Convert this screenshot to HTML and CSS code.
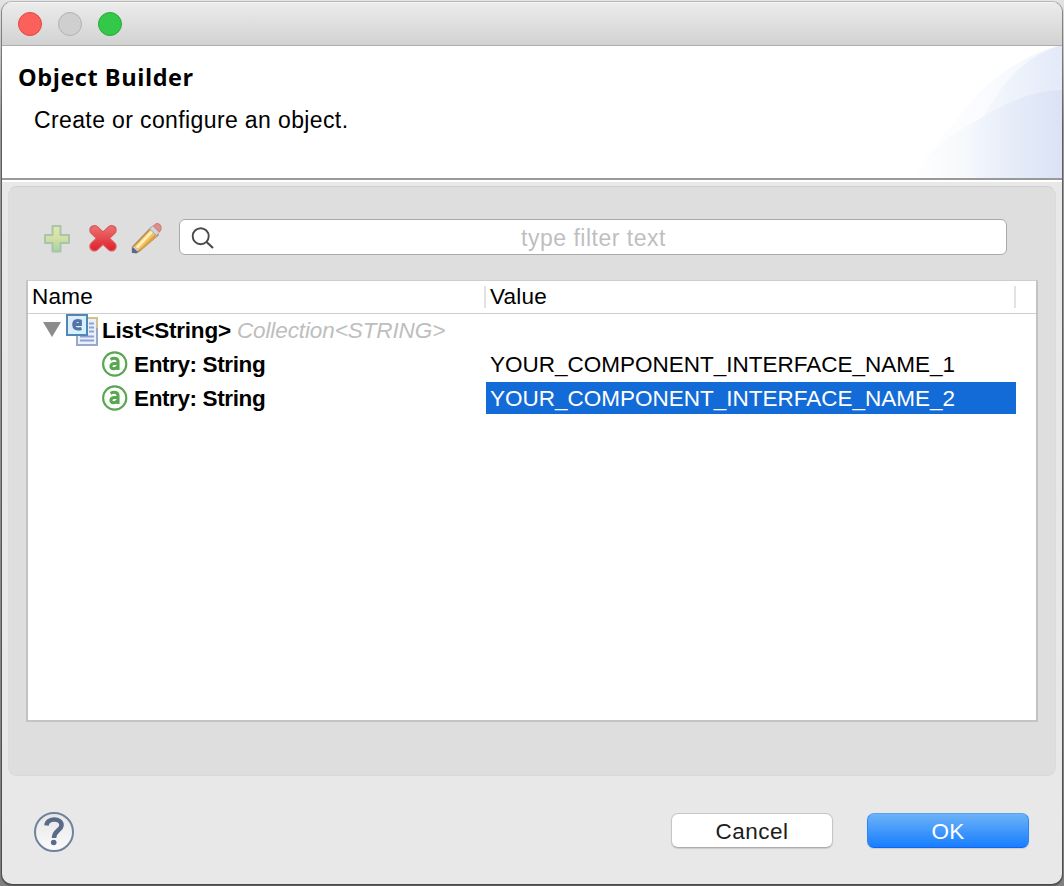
FILE: index.html
```html
<!DOCTYPE html>
<html lang="en">
<head>
<meta charset="utf-8">
<title>Object Builder</title>
<link rel="stylesheet" href="styles.css">
</head>
<body>
<main class="window">
  <div class="titlebar">
    <span class="light light-close"></span>
    <span class="light light-min"></span>
    <span class="light light-zoom"></span>
  </div>
  <header class="banner">
    <div class="banner-text">
      <h1><span class="t-title">Object Builder</span></h1>
      <p><span class="t-desc">Create or configure an object.</span></p>
    </div>
    <svg class="banner-art" width="152" height="132" viewBox="0 0 152 132">
      <defs>
        <linearGradient id="g1" gradientUnits="userSpaceOnUse" x1="0" y1="0" x2="152" y2="0"><stop offset="0" stop-color="#ffffff"/><stop offset=".5" stop-color="#f9fbfe"/><stop offset="1" stop-color="#f1f5fc"/></linearGradient>
        <linearGradient id="g2" gradientUnits="userSpaceOnUse" x1="50" y1="0" x2="152" y2="0"><stop offset="0" stop-color="#f7f9fe"/><stop offset=".4" stop-color="#f1f5fc"/><stop offset="1" stop-color="#e3eaf8"/></linearGradient>
        <linearGradient id="g3" gradientUnits="userSpaceOnUse" x1="0" y1="0" x2="152" y2="0"><stop offset="0" stop-color="#ffffff"/><stop offset=".38" stop-color="#f6f8fb"/><stop offset=".46" stop-color="#f0f4fc"/><stop offset=".7" stop-color="#e5ecf8"/><stop offset="1" stop-color="#dbe2f5"/></linearGradient>
      </defs>
      <path d="M4 132C22 102 48 70 72 44C98 20 125 6 147 0H152V132Z" fill="url(#g1)"/>
      <path d="M50 132Q54 108 64 88Q74 68 88 48Q98 32 112 20Q128 7 148 0H152V132Z" fill="url(#g2)"/>
      <path d="M4 132Q12 116 22 105Q40 89 73 71C100 54 128 44 152 44V132Z" fill="url(#g3)"/>
    </svg>
  </header>
  <section class="group">
    <div class="toolbar">
      <svg class="tool" width="30" height="34" viewBox="0 0 30 34">
        <defs><linearGradient id="gp" x1="0" y1="0" x2="0" y2="1"><stop offset="0" stop-color="#e5e6aa"/><stop offset=".5" stop-color="#d2dfa5"/><stop offset="1" stop-color="#a9d2a0"/></linearGradient></defs>
        <path d="M11.500 6h8v9h8.500v8h-8.500v8.500h-8v-8.500h-7.500v-8h7.500z" fill="url(#gp)" stroke="#a8c5ab" stroke-width="2" stroke-linejoin="round"/>
      </svg>
      <svg class="tool" width="30" height="34" viewBox="0 0 30 34">
        <defs><linearGradient id="gx" gradientUnits="userSpaceOnUse" x1="0" y1="4" x2="0" y2="30"><stop offset="0" stop-color="#ed7a76"/><stop offset="1" stop-color="#e0212d"/></linearGradient></defs>
        <path d="M7.300 10L24.700 26.500M24.700 10L7.300 26.500" fill="none" stroke="#d9595b" stroke-width="10" stroke-linecap="round"/>
        <path d="M7.700 10.400L24.300 26.100M24.300 10.400L7.700 26.100" fill="none" stroke="url(#gx)" stroke-width="8" stroke-linecap="round"/>
      </svg>
      <svg class="tool" width="32" height="34" viewBox="0 0 32 34">
        <g transform="translate(0 2)">
        <path d="M1.500 30V25L20 6L27 13L8 29L5 31Z" fill="#efc164" stroke="#b68b61" stroke-width="1.600"/>
        <path d="M4.500 25L20.500 8L22.500 10L7 26.500Z" fill="#fff0b4"/>
        <path d="M9 27.500L24 12.500L26 14.500L11 27.500Z" fill="#db9f48"/>
        <path d="M1 31V26L3.500 26L7 30L5 31Z" fill="#52689e"/>
        <path d="M3 25L7 28.500" stroke="#dcc8a7" stroke-width="2"/>
        <path d="M18.500 7L22 3.500L28.500 10L25.500 13.500Z" fill="#d3d3d6" stroke="#a9a9ae"/>
        <path d="M22.500 4L25 1.500L28.500 2L30 4.500V7.500L28.500 10Z" fill="#dd908a" stroke="#cc7771"/>
        </g>
      </svg>
      <div class="search">
        <svg width="24" height="24" viewBox="0 0 24 24" fill="none" stroke="#4a4a4a" stroke-width="1.900"><circle cx="9.700" cy="11.200" r="8"/><path d="M15.300 16.800L22 23" stroke-width="2.200"/></svg>
        <span class="placeholder"><span class="t-filter">type filter text</span></span>
      </div>
    </div>
    <div class="table">
      <div class="row head">
        <div class="cell name"><span class="t-name">Name</span></div>
        <div class="cell value"><span class="t-value">Value</span></div>
      </div>
      <div class="row">
        <div class="cell name root">
          <svg class="disclosure" width="18" height="16" viewBox="0 0 18 16"><path d="M0 0H18L9 15Z" fill="#8c8c8c"/></svg>
          <svg class="listicon" width="32" height="32" viewBox="0 0 32 32">
            <defs><linearGradient id="gc" x1="0" y1="0" x2="1" y2="1"><stop offset="0" stop-color="#e1edf7"/><stop offset="1" stop-color="#d3f3fc"/></linearGradient></defs>
            <path d="M11 4H31V31H11Z" fill="#e9f0fa" stroke="#9aa8c8" stroke-width="2"/>
            <path d="M22 4H31V14" fill="none" stroke="#d2c18c" stroke-width="2"/>
            <path d="M23 9.500H28M23 13.500H28M23 17.500H28M14 22.500H28M14 26.500H28" stroke="#8ca2d3" stroke-width="1.800"/>
            <path d="M1 1H21V21H1Z" fill="url(#gc)" stroke="#4f88b8" stroke-width="2"/>
            <path d="M15.500 14.500C10 16 7.800 14 7.800 10.800C7.800 6.800 11 5.800 14.300 7V10.500H9.500" fill="none" stroke="#5274a8" stroke-width="3.200"/>
          </svg>
          <span class="strong"><span class="t-list">List&lt;String&gt;</span></span>
          <span class="type"><span class="t-coll">Collection&lt;STRING&gt;</span></span>
        </div>
        <div class="cell value"></div>
      </div>
      <div class="row">
        <div class="cell name entry">
          <svg width="26" height="26" viewBox="0 0 26 26"><use href="#attr"/></svg>
          <span class="strong"><span class="t-entry">Entry: String</span></span>
        </div>
        <div class="cell value"><span class="t-v1">YOUR_COMPONENT_INTERFACE_NAME_1</span></div>
      </div>
      <div class="row">
        <div class="cell name entry">
          <svg width="26" height="26" viewBox="0 0 26 26">
            <g id="attr" fill="none" stroke="#59a552"><circle cx="12.700" cy="13" r="11.600" fill="#fbfffa" stroke-width="2.100"/><path d="M8.500 8.300C12 6.600 16 7 16 10.500V19M16 12.500H12.500C8 12.500 7.800 17.700 11.500 17.700C13.500 17.700 15 16.500 16 15" stroke-width="3.100"/></g>
          </svg>
          <span class="strong"><span class="t-entry">Entry: String</span></span>
        </div>
        <div class="cell value selected"><span class="t-v1">YOUR_COMPONENT_INTERFACE_NAME_2</span></div>
      </div>
    </div>
  </section>
  <footer class="footer">
    <svg class="help" width="42" height="42" viewBox="0 0 42 42">
      <defs><linearGradient id="gh" x1="0" y1="0" x2="0" y2="1"><stop offset="0" stop-color="#e6e6e6"/><stop offset="1" stop-color="#fbfbfb"/></linearGradient></defs>
      <circle cx="21" cy="21" r="19" fill="url(#gh)" stroke="#71819d" stroke-width="2"/>
      <path d="M13.500 14.500C14 6.500 29 6.500 28.500 14.500C28.200 19.500 21 19.500 21 27" fill="none" stroke="#5a6b8a" stroke-width="4.600"/><circle cx="20.700" cy="31.500" r="2.800" fill="#5a6b8a"/>
    </svg>
    <button class="btn"><span class="t-cancel">Cancel</span></button>
    <button class="btn primary"><span class="t-ok">OK</span></button>
  </footer>
</main>
</body>
</html>
```
FILE: styles.css
```css
* { box-sizing: border-box; }
html, body { height: 100%; }
body {
  margin: 0;
  padding: 2px;
  background: linear-gradient(#e4e4e4 0, #d0d0d0 40px, #9c9c9c 126px, #949494 400px, #808080 100%);
  font: 22.5px/32px "Liberation Sans", Arial, sans-serif;
  color: #000;
  overflow: hidden;
}
.window {
  display: flex;
  flex-direction: column;
  width: 1060px;
  height: 882px;
  border-radius: 10px;
  background: #e8e8e8;
  overflow: hidden;
  box-shadow: 0 0 0 1px rgba(0, 0, 0, .16), 0 1px 1px 1px rgba(0, 0, 0, .3);
}
.window > * { flex-shrink: 0; }
.titlebar {
  display: flex;
  align-items: center;
  gap: 16px;
  height: 44px;
  padding: 1px 0 0 16px;
  background: linear-gradient(#ececec, #d2d2d2);
  border-bottom: 1px solid #adadad;
  box-shadow: inset 0 1px #f5f5f5;
}
.light { width: 24px; height: 24px; border-radius: 50%; border: 1px solid; }
.light-close { background: #fc605b; border-color: #df4744; }
.light-min { background: #cfcfcf; border-color: #b1b1b1; }
.light-zoom { background: #34c84a; border-color: #27aa35; }
.banner {
  display: flex;
  justify-content: space-between;
  height: 134px;
  background: #fff;
  border-bottom: 2px solid #999;
  box-shadow: 0 2px #fff;
}
.banner-text { padding: 15px 0 0 16px; }
.banner h1 { margin: 0; font: bold 23.5px/32px "Open Sans", sans-serif; }
.banner p { margin: 11px 0 0 16px; }
.banner-art { display: block; }
.group {
  height: 590px;
  margin: 6px 6px 0;
  padding: 32px 18px 0;
  background: #dedede;
  border: 1px solid #d3d3d3;
  border-color: #cecece #dadada #d8d8d8;
  border-radius: 9px;
}
.toolbar { display: flex; align-items: center; height: 36px; padding-left: 14px; }
.tool { margin-right: 16px; }
.tool + .tool { margin-right: 14px; }
.tool + .tool + .tool { margin-right: 16px; }
.search {
  display: flex;
  align-items: center;
  width: 828px;
  height: 36px;
  padding-left: 11px;
  background: #fff;
  border: 1px solid #a9a9a9;
  border-radius: 6px;
  color: #bfbfbf;
}
.placeholder { flex: 1; padding: 3px 34px 0 0; text-align: center; }
.table {
  width: 1012px;
  height: 442px;
  margin-top: 25px;
  margin-left: -1px;
  background: #fff;
  border: 2px solid #c3c3c3;
  border-top: 1px solid #cecece;
}
.row { display: flex; height: 32px; margin-bottom: 2px; }
.head { height: 33px; margin-bottom: 0; border-bottom: 1px solid #cecece; }
.cell { display: flex; align-items: center; white-space: nowrap; }
.name { width: 458px; }
.value { width: 530px; padding-left: 4px; }
.row:not(.head) .cell > span { line-height: 30px; padding-top: 2px; }
.head .name { padding-left: 4px; }
.head .value { position: relative; }
.head .value::before, .head .value::after {
  content: "";
  position: absolute;
  top: 5px;
  left: -2px;
  width: 2px;
  height: 22px;
  background: #e2e2e2;
}
.head .value::after { left: 528px; }
.selected { background: #126bd6; color: #fff; }
.root { padding-left: 15px; }
.disclosure { margin-right: 5px; }
.strong { font-weight: bold; margin-left: 4px; }
.type { font-style: italic; color: #bebebe; margin-left: 6px; }
.entry { padding-left: 74px; }
.entry .strong { margin-left: 6px; }
.footer { display: flex; align-items: center; height: 108px; padding: 4px 33px 0 31px; }
.help { margin-right: auto; }
.btn {
  width: 162px;
  height: 35px;
  margin: -3px 0 0 34px;
  padding: 3px 0 0;
  font: inherit;
  line-height: 30px;
  color: #1c1c1c;
  background: #fff;
  border: 1px solid #c6c6c6;
  border-bottom-color: #adadad;
  border-radius: 7px;
  box-shadow: 0 1px 1px rgba(0, 0, 0, .12);
}
.primary {
  color: #fff;
  background: linear-gradient(#6cb2f7, #187eff);
  border-color: #57a2f2 #2f84f5 #0e63f8;
}
.t-title { letter-spacing: .55px; }
.t-desc { font-size: 23px; letter-spacing: .38px; }
.t-filter { font-size: 23px; letter-spacing: .5px; }
.t-name, .t-value { letter-spacing: .25px; }
.t-list { letter-spacing: -.2px; }
.t-coll { letter-spacing: -.1px; }
.t-entry { letter-spacing: -.38px; }
.t-cancel { letter-spacing: .5px; }
.t-ok { letter-spacing: .3px; }
```
